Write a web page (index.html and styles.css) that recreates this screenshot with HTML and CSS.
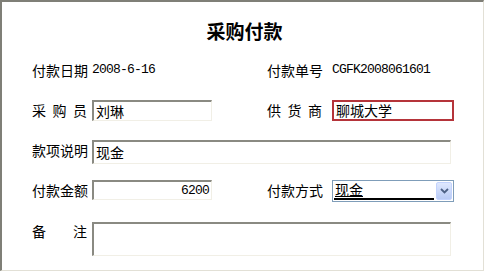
FILE: index.html
```html
<!DOCTYPE html>
<html lang="zh-CN">
<head>
    <meta charset="UTF-8">
    <title>采购付款</title>
    <link rel="stylesheet" href="styles.css">
</head>
<body>
    <div class="panel">
        <h1 class="title">采购付款</h1>

        <div class="form">
            <span class="label">付款日期</span>
            <span class="value mono">2008-6-16</span>
            <span class="label">付款单号</span>
            <span class="value mono">CGFK2008061601</span>

            <span class="label spaced">采 购 员</span>
            <div class="field">刘琳</div>
            <span class="label spaced">供 货 商</span>
            <div class="field field-error">聊城大学</div>

            <span class="label">款项说明</span>
            <div class="field field-wide">现金</div>

            <span class="label">付款金额</span>
            <div class="field field-number mono">6200</div>
            <span class="label">付款方式</span>
            <div class="select">
                <span class="select-text">现金</span>
                <span class="select-button">
                    <svg width="9" height="6" viewBox="0 0 9 6">
                        <path d="M1 1 L4.5 4.5 L8 1" fill="none" stroke="#4d6185" stroke-width="1.8"/>
                    </svg>
                </span>
            </div>

            <span class="label spaced label-top">备 注</span>
            <div class="field field-area"></div>
        </div>
    </div>
</body>
</html>
```

FILE: styles.css
```css
body {
    margin: 0;
    background-color: #ffffff;
    color: #000000;
    font-family: "Noto Sans CJK SC", "DejaVu Sans", sans-serif;
    font-size: 14px;
}

.panel {
    box-sizing: border-box;
    width: 484px;
    height: 271px;
    border-top: 2px solid #7f7f77;
    border-left: 2px solid #7f7f77;
    border-right: 1px solid #e2e0d6;
    border-bottom: 1px solid #e2e0d6;
    padding-left: 30px;
}

.title {
    margin: 0;
    padding-top: 16px;
    padding-right: 26px;
    line-height: 26px;
    font-size: 19px;
    font-weight: bold;
    text-align: center;
}

.form {
    margin-top: 6px;
    display: grid;
    grid-template-columns: 60px 175px 65px 121px;
    grid-template-rows: 40px 40px 40px 40px 46px;
    align-items: center;
}

.label {
    width: 55px;
    line-height: 18px;
    white-space: nowrap;
}

.spaced {
    text-align: justify;
    text-align-last: justify;
}

.label-top {
    align-self: start;
    margin-top: 12px;
}

.value {
    line-height: 18px;
}

.mono {
    font-family: "Liberation Mono", "DejaVu Sans Mono", monospace;
    font-size: 13px;
    letter-spacing: -0.8px;
}

.field {
    box-sizing: border-box;
    width: 120px;
    height: 21px;
    padding: 0 2px;
    line-height: 18px;
    background-color: #ffffff;
    border-top: 2px solid #8a8a82;
    border-left: 2px solid #8a8a82;
    border-right: 1px solid #f1efe6;
    border-bottom: 1px solid #f1efe6;
    white-space: nowrap;
}

.field-error {
    width: 122px;
    border: 2px solid #b5343a;
    line-height: 17px;
}

.field-wide {
    grid-column: 2 / 5;
    width: 359px;
    height: 24px;
    line-height: 21px;
    margin-top: 3px;
}

.field-number {
    text-align: right;
    height: 20px;
    line-height: 18px;
}

.field-area {
    grid-column: 2 / 5;
    align-self: start;
    width: 359px;
    height: 34px;
    margin-top: 12px;
}

.select {
    box-sizing: border-box;
    width: 122px;
    height: 22px;
    border: 1px solid #7f9db9;
    background-color: #ffffff;
    display: flex;
    align-items: center;
    padding: 0 1px;
    margin-top: 2px;
}

.select-text {
    box-sizing: border-box;
    width: 100px;
    height: 18px;
    line-height: 15px;
    padding-left: 1px;
    border-bottom: 2px solid #000000;
    text-decoration: underline;
}

.select-button {
    box-sizing: border-box;
    width: 16px;
    height: 18px;
    margin-left: auto;
    border: 1px solid #c3d3fd;
    border-radius: 2px;
    background: linear-gradient(#dfe8fe, #b9cbf5);
    display: flex;
    align-items: center;
    justify-content: center;
}
```
